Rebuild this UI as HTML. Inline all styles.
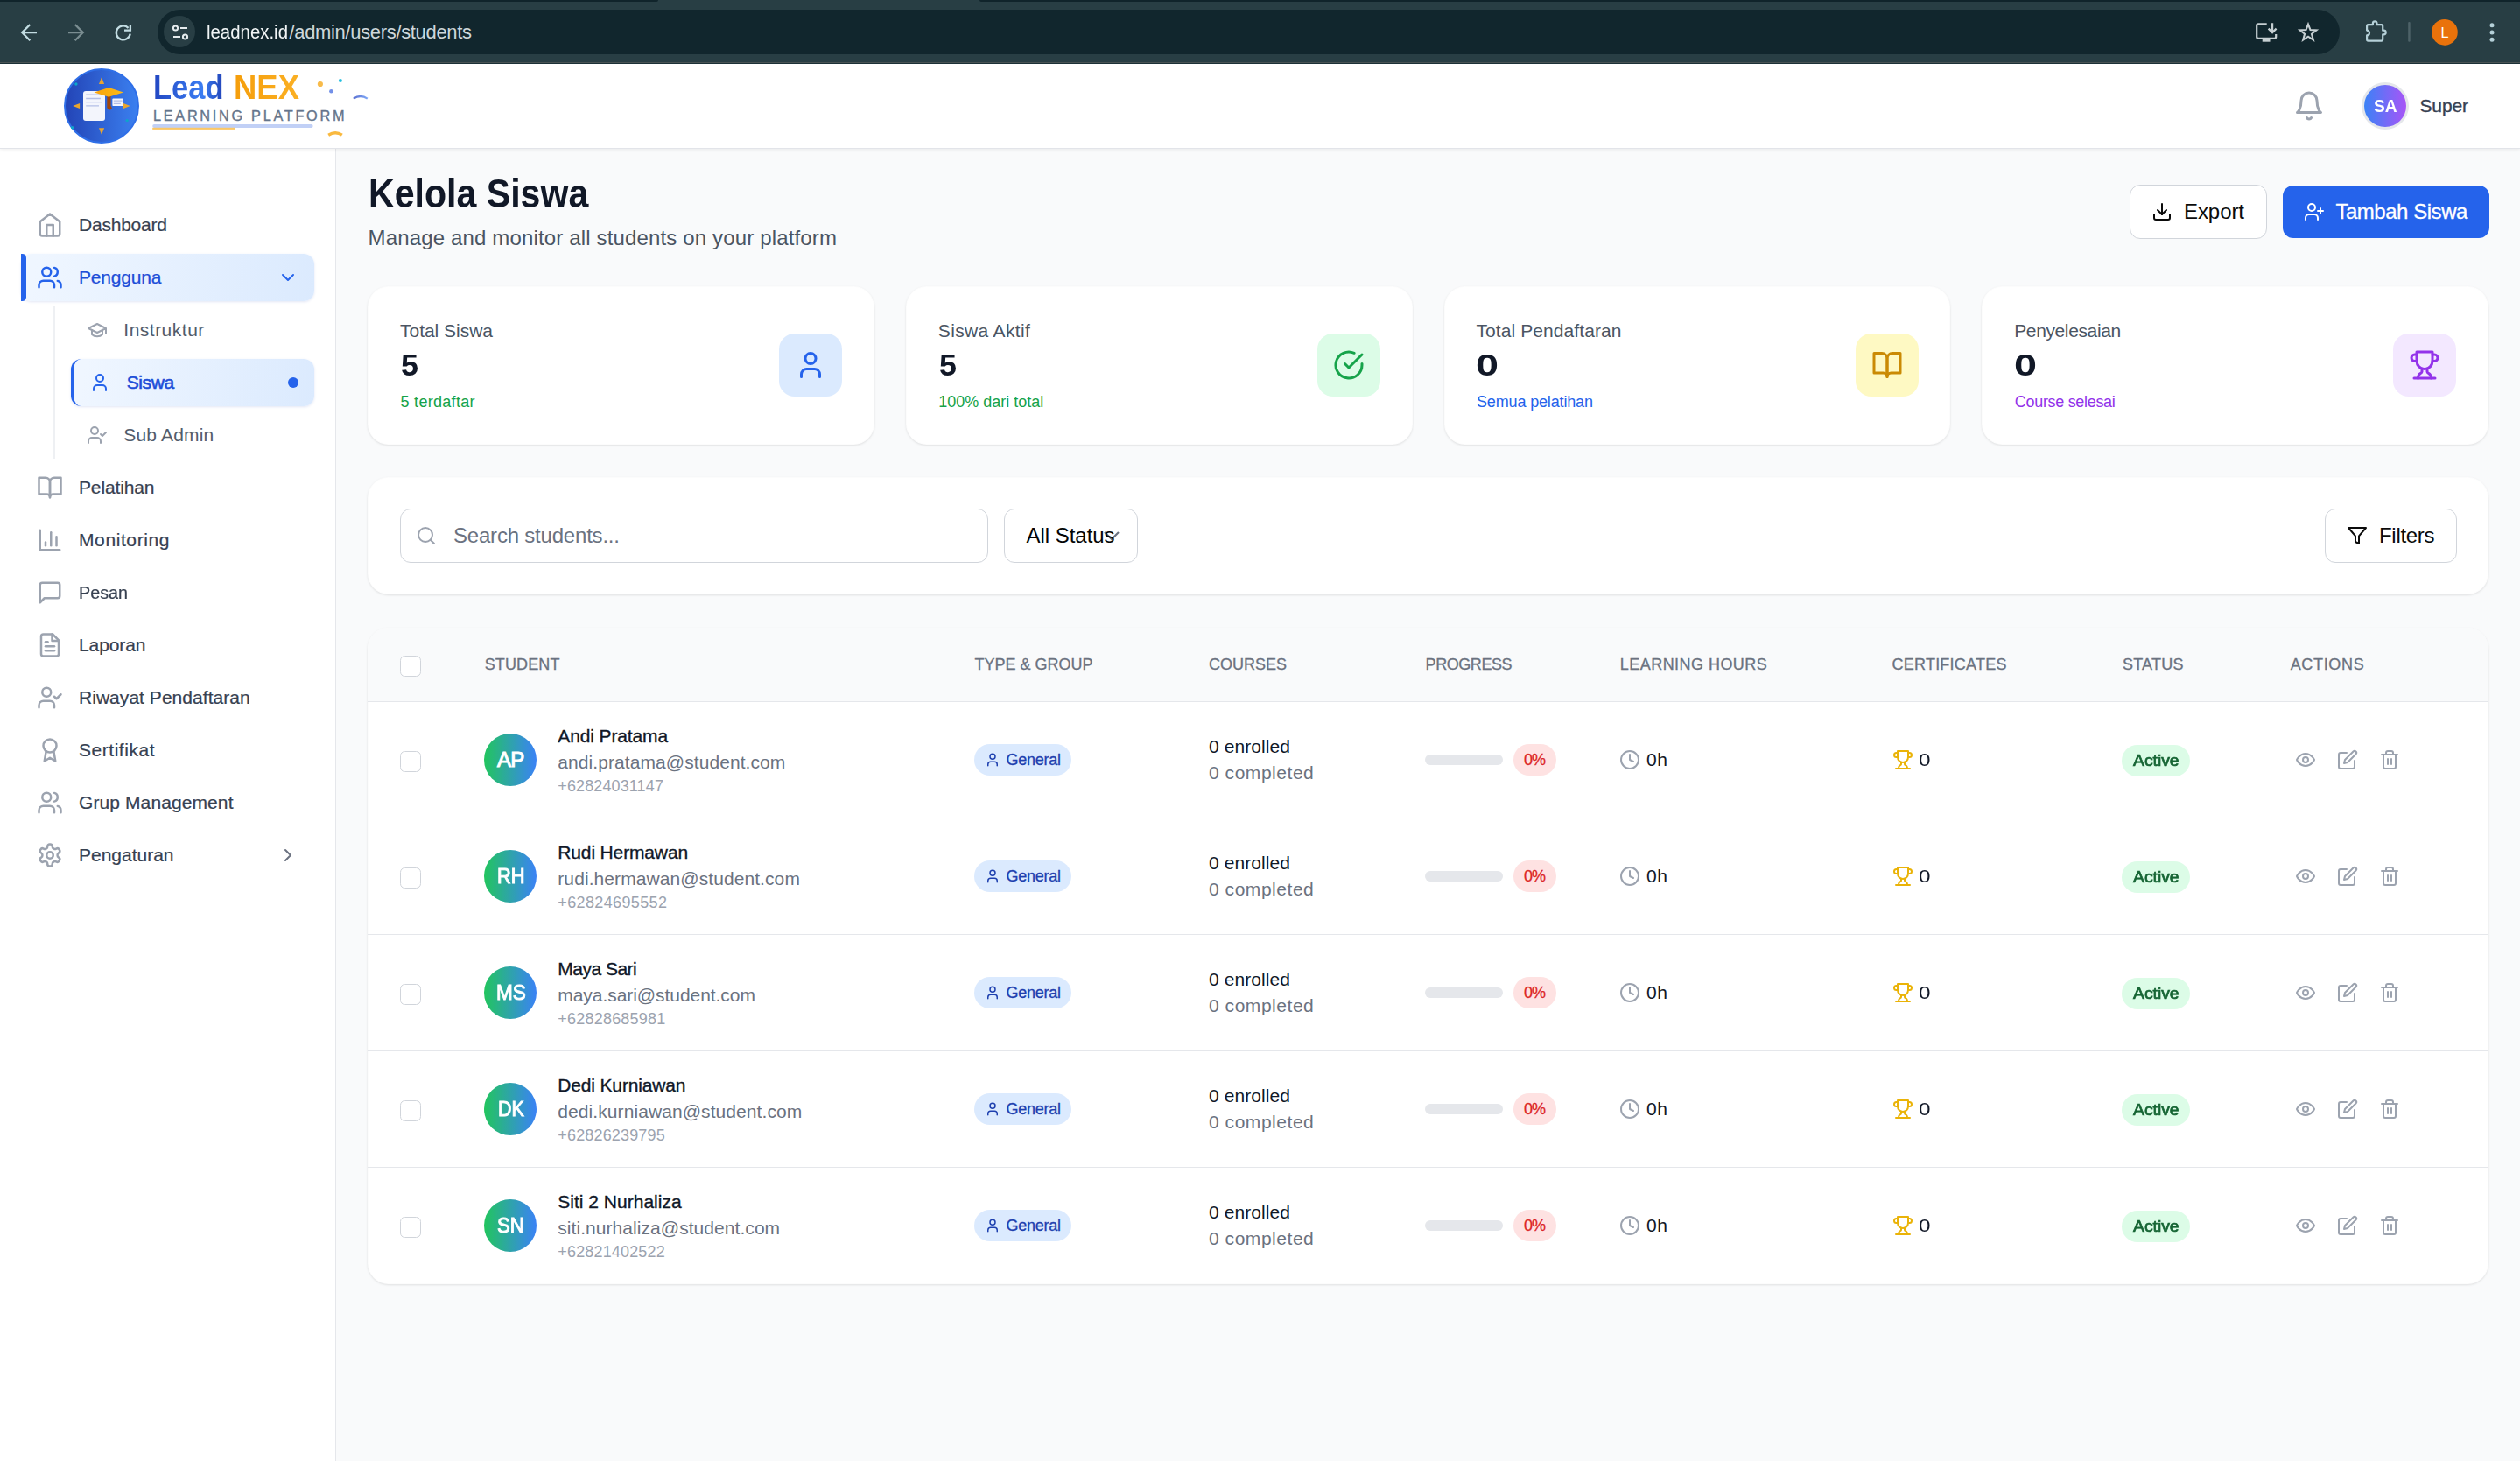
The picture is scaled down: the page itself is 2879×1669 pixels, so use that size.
<!DOCTYPE html>
<html lang="id"><head><meta charset="utf-8"><title>Kelola Siswa - LeadNEX</title>
<style>
html,body{margin:0;padding:0}
body{width:2879px;height:1669px;overflow:hidden;position:relative;background:#f9fafb;font-family:"Liberation Sans", sans-serif;}
.t{position:absolute;white-space:nowrap;line-height:1;}
.b{position:absolute;box-sizing:border-box;}
.i{position:absolute;display:block;overflow:visible}
</style></head>
<body>
<div class="b" style="left:0.0px;top:0.0px;width:2879.0px;height:73.0px;background:#283e44;"></div>
<div class="b" style="left:0.0px;top:0.0px;width:751.6px;height:1.8px;background:#10242b;border-radius:0 0 4px 0;"></div>
<div class="b" style="left:1118.6px;top:0.0px;width:1760.4px;height:1.8px;background:#10242b;border-radius:0 0 0 4px;"></div>
<div class="b" style="left:0.0px;top:71.0px;width:2879.0px;height:1.0px;background:#4a5354;"></div>
<div class="b" style="left:0.0px;top:72.0px;width:2879.0px;height:1.0px;background:#1d3238;"></div>
<div class="b" style="left:180.0px;top:11.0px;width:2493.0px;height:51.0px;background:#11262d;border-radius:26px;"></div>
<div class="b" style="left:187.2px;top:18.4px;width:36.0px;height:36.0px;background:#283e44;border-radius:50%;"></div>
<svg class="i" style="left:0;top:0" width="180" height="73" viewBox="0 0 180 73" fill="none" stroke-width="2.3" stroke-linecap="butt" stroke-linejoin="miter"><path d="M42 37.100H26M34.300 28 25.200 37.100 34.300 46.200" stroke="#c2dce2"/><path d="M78 37.100h16M85.700 28 94.800 37.100 85.700 46.200" stroke="#7a8d91"/><path d="M148.700 38.600A8 8 0 1 1 146.600 31.900" stroke="#c2dce2"/><path d="M148.900 28.100v6.500h-6.900" stroke="#c2dce2"/></svg>
<svg class="i" style="left:194.500px;top:26px" width="22" height="22" viewBox="0 0 22 22" fill="none" stroke="#e6ecee" stroke-width="2"><circle cx="5.5" cy="6" r="2.6"/><path d="M11 6h8"/><circle cx="16.5" cy="16" r="2.6"/><path d="M3 16h8"/></svg>
<span class="t" id="t0" style="left:236.0px;top:26.4px;font-size:22px;color:#f1f5f6;transform:scaleX(0.9271);transform-origin:0 0;">leadnex.id</span>
<span class="t" id="t1" style="left:330.5px;top:26.4px;font-size:22px;color:#ced7da;letter-spacing:-0.337px;">/admin/users/students</span>
<svg class="i" style="left:2560px;top:0" width="319" height="73" viewBox="2560 0 319 73" fill="none" stroke-width="2.2" stroke-linejoin="round"><path d="M2589.700 27.400H2580a1.800 1.800 0 0 0-1.800 1.800v12.900a1.800 1.800 0 0 0 1.800 1.800h18.400a1.800 1.800 0 0 0 1.800-1.800V39.100" stroke="#c6cfd2"/><rect x="2584.700" y="44.800" width="8.800" height="2.900" fill="#c6cfd2" stroke="none"/><path d="M2596.100 26.200v10.300M2591.600 32.600l4.500 4.500 4.500-4.500" stroke="#c6cfd2" stroke-linejoin="miter"/><polygon points="2637.00,27.60 2639.47,34.10 2646.42,34.44 2640.99,38.80 2642.82,45.51 2637.00,41.70 2631.18,45.51 2633.01,38.80 2627.58,34.44 2634.53,34.10" stroke="#c6cfd2" stroke-linejoin="miter" stroke-width="2.100"/><path d="M2704.100 34.600V29.700a1.500 1.500 0 0 1 1.500-1.500H2710.900V26.600a2.300 2.300 0 0 1 4.600 0V28.200H2720.700a1.500 1.500 0 0 1 1.500 1.500V34.700h1.200a2.300 2.300 0 0 1 0 4.600h-1.200V45.100a1.500 1.500 0 0 1-1.500 1.500H2705.600a1.500 1.500 0 0 1-1.500-1.500V40.400a2.900 2.900 0 0 0 0-5.800z" stroke="#b5d0d8"/><rect x="2751.200" y="24.900" width="2.500" height="22.800" rx="1.200" fill="#4d6268" stroke="none"/><circle cx="2792.900" cy="36.800" r="14.900" fill="#e9720b" stroke="none"/><circle cx="2847" cy="28.700" r="2.500" fill="#b5d0d8" stroke="none"/><circle cx="2847" cy="37" r="2.500" fill="#b5d0d8" stroke="none"/><circle cx="2847" cy="45.200" r="2.500" fill="#b5d0d8" stroke="none"/></svg>
<span class="t" id="t2" style="left:2788.5px;top:29.4px;font-size:16.3px;color:#ffffff;">L</span>
<div class="b" style="left:0.0px;top:170.0px;width:384.0px;height:1500.0px;background:#fff;border-right:1.5px solid #e5e7eb;"></div>
<div class="b" style="left:0.0px;top:73.0px;width:2879.0px;height:97.0px;background:#fff;border-bottom:1.5px solid #e2e4e9;box-shadow:0 1px 4px rgba(0,0,0,.07);"></div>
<svg class="i" style="left:70px;top:76px" width="360" height="92" viewBox="70 76 360 92">
<defs><linearGradient id="lg1" x1="0" y1="0" x2="1" y2="0"><stop offset="0" stop-color="#2344b6"/><stop offset="1" stop-color="#3b80f0"/></linearGradient>
<linearGradient id="lg3" x1="0" y1="0" x2="1" y2="0"><stop offset="0" stop-color="#f8a30f"/><stop offset="1" stop-color="#fdbb14"/></linearGradient>
<linearGradient id="lg4" x1="0" y1="0" x2="1" y2="0"><stop offset="0" stop-color="#5a6fd0"/><stop offset="1" stop-color="#7fa8f6"/></linearGradient></defs>
<circle cx="116" cy="121" r="42" fill="url(#lg1)" stroke="#2f6fe8" stroke-width="2"/>
<polygon points="116,88.300 119.100,95.900 113,95.900" fill="#e9a52e"/><polygon points="116,153.700 119.100,146.200 113,146.200" fill="#e9a52e"/>
<polygon points="83.200,121 91.100,118 91.100,124" fill="#e9a52e"/><polygon points="148.700,121 141,118 141,124" fill="#e9a52e"/>
<circle cx="86.900" cy="96" r="1.700" fill="#0ea5c9"/><circle cx="145.200" cy="137.600" r="1.700" fill="#0ea5c9"/><circle cx="82.600" cy="145.800" r="1.700" fill="#0ea5c9"/>
<rect x="95" y="104" width="25" height="34" rx="3" fill="#f3f5fc"/>
<path d="M98.200 108.100h18.600M98.200 112.500h16.700M98.200 116.600h18.600M98.200 120.800h14.800" stroke="#b4bfe6" stroke-width="1.300"/>
<rect x="128.400" y="112.600" width="12.600" height="8.400" rx=".8" fill="#f3f5fc"/><path d="M129.800 115.200h9.800M129.800 118.400h8" stroke="#b4bfe6" stroke-width="1.200"/>
<path d="M122.300 109v13.500a2.100 2.100 0 0 0 4.200 0v-13.500z" fill="#a0460a"/><circle cx="125.400" cy="123.300" r="2.200" fill="#a0460a"/>
<polygon points="107.500,105.500 124.200,100 141,105.500 124.200,110.700" fill="url(#lg3)"/>
<circle cx="365.900" cy="96" r="3.100" fill="#f8bb4a"/><circle cx="388.900" cy="91.900" r="2" fill="#22bfe0"/><circle cx="378.400" cy="104.300" r="2.300" fill="#7390e8"/>
<path d="M403.800 112.600q8-5.200 16 0" fill="none" stroke="url(#lg4)" stroke-width="2.300"/>
<path d="M375.200 154.200q8-5 15.600 0" fill="none" stroke="#f9b93f" stroke-width="3.400"/>
<rect x="174.200" y="141.900" width="183.400" height="4" rx="2" fill="#c1d0f6"/><rect x="174.200" y="145.800" width="93.800" height="2.100" fill="#fbc766"/>
</svg>
<span class="t" id="t3" style="left:175.0px;top:80.7px;font-size:38.5px;color:#2b5fd6;font-weight:700;transform:scaleX(0.8958);transform-origin:0 0;background:linear-gradient(90deg,#2247c2,#3b7df2 70%,#2041b6);-webkit-background-clip:text;background-clip:text;color:transparent;">Lead</span>
<span class="t" id="t4" style="left:266.5px;top:80.7px;font-size:38.5px;color:#f8a51b;font-weight:700;transform:scaleX(0.9473);transform-origin:0 0;background:linear-gradient(90deg,#f59e0b,#fbb024);-webkit-background-clip:text;background-clip:text;color:transparent;">NEX</span>
<span class="t" id="t5" style="left:175.0px;top:123.7px;font-size:16.3px;color:#64748b;-webkit-text-stroke:0.35px #64748b;letter-spacing:2.706px;">LEARNING PLATFORM</span>
<svg class="i" style="left:2619.6px;top:103.0px;" width="36" height="36" viewBox="0 0 24 24" fill="none" stroke="#9ca3af" stroke-width="2" stroke-linecap="round" stroke-linejoin="round"><path d="M6 8a6 6 0 0 1 12 0c0 7 3 9 3 9H3s3-2 3-9"/><path d="M10.3 21a1.94 1.94 0 0 0 3.4 0"/></svg>
<div class="b" style="left:2698.0px;top:94.0px;width:54.0px;height:54.0px;background:#e5e7eb;border-radius:50%;"></div>
<div class="b" style="left:2701.0px;top:97.0px;width:48.0px;height:48.0px;background:linear-gradient(90deg,#3b82f6,#a855f7);border-radius:50%;"></div>
<span class="t" id="t6" style="left:2711.7px;top:110.2px;font-size:21px;color:#fff;font-weight:700;transform:scaleX(0.9113);transform-origin:0 0;">SA</span>
<span class="t" id="t7" style="left:2764.5px;top:110.2px;font-size:21px;color:#374151;-webkit-text-stroke:0.35px #374151;letter-spacing:-0.137px;">Super</span>
<div class="b" style="left:24.0px;top:290.0px;width:335.0px;height:54.0px;background:linear-gradient(100deg,#eff6ff 5%,#dbeafe);border-radius:12px;box-shadow:0 1px 3px rgba(30,64,175,.13);"></div>
<div class="b" style="left:24.0px;top:290.0px;width:6.0px;height:54.0px;background:#2563eb;border-radius:0 4.5px 4.5px 0;"></div>
<div class="b" style="left:60.2px;top:350.0px;width:2.8px;height:174.0px;background:#eef0f3;"></div>
<div class="b" style="left:81.0px;top:410.0px;width:278.0px;height:54.0px;background:linear-gradient(100deg,#eff6ff 5%,#dbeafe);border-radius:12px;border-left:3px solid #2563eb;box-shadow:0 1px 3px rgba(30,64,175,.13);"></div>
<div class="b" style="left:329.0px;top:431.0px;width:12.0px;height:12.0px;background:#2563eb;border-radius:50%;"></div>
<svg class="i" style="left:42.0px;top:242.0px;" width="30" height="30" viewBox="0 0 24 24" fill="none" stroke="#9ca3af" stroke-width="2" stroke-linecap="round" stroke-linejoin="round"><path d="m3 9 9-7 9 7v11a2 2 0 0 1-2 2H5a2 2 0 0 1-2-2z"/><polyline points="9 22 9 12 15 12 15 22"/></svg>
<span class="t" id="t8" style="left:90.0px;top:246.2px;font-size:21px;color:#374151;-webkit-text-stroke:0.22px #374151;letter-spacing:-0.217px;">Dashboard</span>
<svg class="i" style="left:42.0px;top:302.0px;" width="30" height="30" viewBox="0 0 24 24" fill="none" stroke="#2563eb" stroke-width="2" stroke-linecap="round" stroke-linejoin="round"><path d="M16 21v-2a4 4 0 0 0-4-4H6a4 4 0 0 0-4 4v2"/><circle cx="9" cy="7" r="4"/><path d="M22 21v-2a4 4 0 0 0-3-3.87"/><path d="M16 3.13a4 4 0 0 1 0 7.75"/></svg>
<span class="t" id="t9" style="left:90.0px;top:306.2px;font-size:21px;color:#1d4ed8;-webkit-text-stroke:0.22px #1d4ed8;letter-spacing:-0.195px;">Pengguna</span>
<svg class="i" style="left:317.0px;top:305.0px;" width="24" height="24" viewBox="0 0 24 24" fill="none" stroke="#2563eb" stroke-width="2" stroke-linecap="round" stroke-linejoin="round"><path d="m6 9 6 6 6-6"/></svg>
<svg class="i" style="left:99.0px;top:365.0px;" width="24" height="24" viewBox="0 0 24 24" fill="none" stroke="#9ca3af" stroke-width="2" stroke-linecap="round" stroke-linejoin="round"><path d="M22 10v6M2 10l10-5 10 5-10 5z"/><path d="M6 12v5c3 3 9 3 12 0v-5"/></svg>
<span class="t" id="t10" style="left:141.3px;top:365.9px;font-size:21px;color:#525c6b;letter-spacing:0.497px;">Instruktur</span>
<svg class="i" style="left:102.0px;top:425.0px;" width="24" height="24" viewBox="0 0 24 24" fill="none" stroke="#2563eb" stroke-width="2" stroke-linecap="round" stroke-linejoin="round"><path d="M19 21v-2a4 4 0 0 0-4-4H9a4 4 0 0 0-4 4v2"/><circle cx="12" cy="7" r="4"/></svg>
<span class="t" id="t11" style="left:144.7px;top:425.9px;font-size:21px;color:#1d4ed8;-webkit-text-stroke:0.6px #1d4ed8;letter-spacing:-0.383px;">Siswa</span>
<svg class="i" style="left:99.0px;top:485.0px;" width="24" height="24" viewBox="0 0 24 24" fill="none" stroke="#9ca3af" stroke-width="2" stroke-linecap="round" stroke-linejoin="round"><path d="M16 21v-2a4 4 0 0 0-4-4H6a4 4 0 0 0-4 4v2"/><circle cx="9" cy="7" r="4"/><polyline points="16 11 18 13 22 9"/></svg>
<span class="t" id="t12" style="left:141.3px;top:485.9px;font-size:21px;color:#525c6b;letter-spacing:0.178px;">Sub Admin</span>
<svg class="i" style="left:42.0px;top:542.0px;" width="30" height="30" viewBox="0 0 24 24" fill="none" stroke="#9ca3af" stroke-width="2" stroke-linecap="round" stroke-linejoin="round"><path d="M2 3h6a4 4 0 0 1 4 4v14a3 3 0 0 0-3-3H2z"/><path d="M22 3h-6a4 4 0 0 0-4 4v14a3 3 0 0 1 3-3h7z"/></svg>
<span class="t" id="t13" style="left:90.0px;top:546.2px;font-size:21px;color:#374151;-webkit-text-stroke:0.22px #374151;letter-spacing:-0.135px;">Pelatihan</span>
<svg class="i" style="left:42.0px;top:602.0px;" width="30" height="30" viewBox="0 0 24 24" fill="none" stroke="#9ca3af" stroke-width="2" stroke-linecap="round" stroke-linejoin="round"><path d="M3 3v18h18"/><path d="M18 17V9"/><path d="M13 17V5"/><path d="M8 17v-3"/></svg>
<span class="t" id="t14" style="left:90.0px;top:606.2px;font-size:21px;color:#374151;-webkit-text-stroke:0.22px #374151;letter-spacing:0.604px;">Monitoring</span>
<svg class="i" style="left:42.0px;top:662.0px;" width="30" height="30" viewBox="0 0 24 24" fill="none" stroke="#9ca3af" stroke-width="2" stroke-linecap="round" stroke-linejoin="round"><path d="M21 15a2 2 0 0 1-2 2H7l-4 4V5a2 2 0 0 1 2-2h14a2 2 0 0 1 2 2z"/></svg>
<span class="t" id="t15" style="left:90.0px;top:666.2px;font-size:21px;color:#374151;-webkit-text-stroke:0.22px #374151;transform:scaleX(0.9404);transform-origin:0 0;">Pesan</span>
<svg class="i" style="left:42.0px;top:722.0px;" width="30" height="30" viewBox="0 0 24 24" fill="none" stroke="#9ca3af" stroke-width="2" stroke-linecap="round" stroke-linejoin="round"><path d="M14.5 2H6a2 2 0 0 0-2 2v16a2 2 0 0 0 2 2h12a2 2 0 0 0 2-2V7.5L14.5 2z"/><polyline points="14 2 14 8 20 8"/><line x1="16" x2="8" y1="13" y2="13"/><line x1="16" x2="8" y1="17" y2="17"/><line x1="10" x2="8" y1="9" y2="9"/></svg>
<span class="t" id="t16" style="left:90.0px;top:726.2px;font-size:21px;color:#374151;-webkit-text-stroke:0.22px #374151;letter-spacing:-0.096px;">Laporan</span>
<svg class="i" style="left:42.0px;top:782.0px;" width="30" height="30" viewBox="0 0 24 24" fill="none" stroke="#9ca3af" stroke-width="2" stroke-linecap="round" stroke-linejoin="round"><path d="M16 21v-2a4 4 0 0 0-4-4H6a4 4 0 0 0-4 4v2"/><circle cx="9" cy="7" r="4"/><polyline points="16 11 18 13 22 9"/></svg>
<span class="t" id="t17" style="left:90.0px;top:786.2px;font-size:21px;color:#374151;-webkit-text-stroke:0.22px #374151;letter-spacing:0.041px;">Riwayat Pendaftaran</span>
<svg class="i" style="left:42.0px;top:842.0px;" width="30" height="30" viewBox="0 0 24 24" fill="none" stroke="#9ca3af" stroke-width="2" stroke-linecap="round" stroke-linejoin="round"><circle cx="12" cy="8" r="6"/><path d="M15.477 12.89 17 22l-5-3-5 3 1.523-9.11"/></svg>
<span class="t" id="t18" style="left:90.0px;top:846.2px;font-size:21px;color:#374151;-webkit-text-stroke:0.22px #374151;letter-spacing:0.533px;">Sertifikat</span>
<svg class="i" style="left:42.0px;top:902.0px;" width="30" height="30" viewBox="0 0 24 24" fill="none" stroke="#9ca3af" stroke-width="2" stroke-linecap="round" stroke-linejoin="round"><path d="M16 21v-2a4 4 0 0 0-4-4H6a4 4 0 0 0-4 4v2"/><circle cx="9" cy="7" r="4"/><path d="M22 21v-2a4 4 0 0 0-3-3.87"/><path d="M16 3.13a4 4 0 0 1 0 7.75"/></svg>
<span class="t" id="t19" style="left:90.0px;top:906.2px;font-size:21px;color:#374151;-webkit-text-stroke:0.22px #374151;letter-spacing:0.099px;">Grup Management</span>
<svg class="i" style="left:42.0px;top:962.0px;" width="30" height="30" viewBox="0 0 24 24" fill="none" stroke="#9ca3af" stroke-width="2" stroke-linecap="round" stroke-linejoin="round"><path d="M12.22 2h-.44a2 2 0 0 0-2 2v.18a2 2 0 0 1-1 1.73l-.43.25a2 2 0 0 1-2 0l-.15-.08a2 2 0 0 0-2.73.73l-.22.38a2 2 0 0 0 .73 2.73l.15.1a2 2 0 0 1 1 1.72v.51a2 2 0 0 1-1 1.74l-.15.09a2 2 0 0 0-.73 2.73l.22.38a2 2 0 0 0 2.73.73l.15-.08a2 2 0 0 1 2 0l.43.25a2 2 0 0 1 1 1.73V20a2 2 0 0 0 2 2h.44a2 2 0 0 0 2-2v-.18a2 2 0 0 1 1-1.73l.43-.25a2 2 0 0 1 2 0l.15.08a2 2 0 0 0 2.73-.73l.22-.39a2 2 0 0 0-.73-2.73l-.15-.08a2 2 0 0 1-1-1.74v-.5a2 2 0 0 1 1-1.74l.15-.09a2 2 0 0 0 .73-2.73l-.22-.38a2 2 0 0 0-2.73-.73l-.15.08a2 2 0 0 1-2 0l-.43-.25a2 2 0 0 1-1-1.73V4a2 2 0 0 0-2-2z"/><circle cx="12" cy="12" r="3"/></svg>
<span class="t" id="t20" style="left:90.0px;top:966.2px;font-size:21px;color:#374151;-webkit-text-stroke:0.22px #374151;letter-spacing:-0.010px;">Pengaturan</span>
<svg class="i" style="left:317.0px;top:965.0px;" width="24" height="24" viewBox="0 0 24 24" fill="none" stroke="#6b7280" stroke-width="2" stroke-linecap="round" stroke-linejoin="round"><path d="m9 18 6-6-6-6"/></svg>
<span class="t" id="t21" style="left:420.5px;top:198.3px;font-size:46px;color:#111827;font-weight:700;transform:scaleX(0.8936);transform-origin:0 0;">Kelola Siswa</span>
<span class="t" id="t22" style="left:420.5px;top:259.9px;font-size:24px;color:#4b5563;letter-spacing:0.153px;">Manage and monitor all students on your platform</span>
<div class="b" style="left:2433.0px;top:211.0px;width:157.0px;height:62.0px;background:#fff;border:1.5px solid #d1d5db;border-radius:12px;"></div>
<svg class="i" style="left:2458.0px;top:230.0px;" width="24" height="24" viewBox="0 0 24 24" fill="none" stroke="#0b0b0b" stroke-width="2" stroke-linecap="round" stroke-linejoin="round"><path d="M21 15v4a2 2 0 0 1-2 2H5a2 2 0 0 1-2-2v-4"/><polyline points="7 10 12 15 17 10"/><line x1="12" x2="12" y1="15" y2="3"/></svg>
<span class="t" id="t23" style="left:2495.0px;top:230.0px;font-size:24px;color:#0b0b0b;letter-spacing:-0.075px;">Export</span>
<div class="b" style="left:2608.0px;top:212.0px;width:236.0px;height:60.0px;background:#2563eb;border-radius:12px;"></div>
<svg class="i" style="left:2632.0px;top:230.0px;" width="24" height="24" viewBox="0 0 24 24" fill="none" stroke="#fff" stroke-width="2" stroke-linecap="round" stroke-linejoin="round"><path d="M16 21v-2a4 4 0 0 0-4-4H6a4 4 0 0 0-4 4v2"/><circle cx="9" cy="7" r="4"/><line x1="19" x2="19" y1="8" y2="14"/><line x1="22" x2="16" y1="11" y2="11"/></svg>
<span class="t" id="t24" style="left:2668.4px;top:230.0px;font-size:24px;color:#fff;-webkit-text-stroke:0.3px #fff;letter-spacing:-0.462px;">Tambah Siswa</span>
<div class="b" style="left:420.0px;top:327.0px;width:578.8px;height:180.5px;background:#fff;border-radius:24px;box-shadow:0 1px 3px rgba(0,0,0,.08),0 1px 2px rgba(0,0,0,.03),inset 0 0 0 1px rgba(17,24,39,.012);"></div>
<span class="t" id="t25" style="left:457.0px;top:367.2px;font-size:21px;color:#4b5563;letter-spacing:-0.022px;">Total Siswa</span>
<span class="t" id="t26" style="left:458.0px;top:399.9px;font-size:34.3px;color:#111827;font-weight:700;transform:scaleX(1.0483);transform-origin:0 0;">5</span>
<span class="t" id="t27" style="left:457.5px;top:449.6px;font-size:18px;color:#16a34a;letter-spacing:0.295px;">5 terdaftar</span>
<div class="b" style="left:890.0px;top:381.0px;width:72.0px;height:72.0px;background:#dbeafe;border-radius:18px;"></div>
<svg class="i" style="left:908.0px;top:399.0px;" width="36" height="36" viewBox="0 0 24 24" fill="none" stroke="#2563eb" stroke-width="2" stroke-linecap="round" stroke-linejoin="round"><path d="M19 21v-2a4 4 0 0 0-4-4H9a4 4 0 0 0-4 4v2"/><circle cx="12" cy="7" r="4"/></svg>
<div class="b" style="left:1034.8px;top:327.0px;width:578.8px;height:180.5px;background:#fff;border-radius:24px;box-shadow:0 1px 3px rgba(0,0,0,.08),0 1px 2px rgba(0,0,0,.03),inset 0 0 0 1px rgba(17,24,39,.012);"></div>
<span class="t" id="t28" style="left:1071.8px;top:367.2px;font-size:21px;color:#4b5563;letter-spacing:0.345px;">Siswa Aktif</span>
<span class="t" id="t29" style="left:1072.8px;top:399.9px;font-size:34.3px;color:#111827;font-weight:700;transform:scaleX(1.0483);transform-origin:0 0;">5</span>
<span class="t" id="t30" style="left:1072.2px;top:449.6px;font-size:18px;color:#16a34a;letter-spacing:-0.006px;">100% dari total</span>
<div class="b" style="left:1504.8px;top:381.0px;width:72.0px;height:72.0px;background:#dcfce7;border-radius:18px;"></div>
<svg class="i" style="left:1522.8px;top:399.0px;" width="36" height="36" viewBox="0 0 24 24" fill="none" stroke="#16a34a" stroke-width="2" stroke-linecap="round" stroke-linejoin="round"><path d="M22 11.08V12a10 10 0 1 1-5.93-9.14"/><polyline points="22 4 12 14.01 9 11.01"/></svg>
<div class="b" style="left:1649.5px;top:327.0px;width:578.8px;height:180.5px;background:#fff;border-radius:24px;box-shadow:0 1px 3px rgba(0,0,0,.08),0 1px 2px rgba(0,0,0,.03),inset 0 0 0 1px rgba(17,24,39,.012);"></div>
<span class="t" id="t31" style="left:1686.5px;top:367.2px;font-size:21px;color:#4b5563;letter-spacing:0.086px;">Total Pendaftaran</span>
<span class="t" id="t32" style="left:1686.0px;top:399.9px;font-size:34.3px;color:#111827;font-weight:700;transform:scaleX(1.3628);transform-origin:0 0;">0</span>
<span class="t" id="t33" style="left:1687.0px;top:449.6px;font-size:18px;color:#2563eb;letter-spacing:-0.151px;">Semua pelatihan</span>
<div class="b" style="left:2119.5px;top:381.0px;width:72.0px;height:72.0px;background:#fef9c3;border-radius:18px;"></div>
<svg class="i" style="left:2137.5px;top:399.0px;" width="36" height="36" viewBox="0 0 24 24" fill="none" stroke="#ca8a04" stroke-width="2" stroke-linecap="round" stroke-linejoin="round"><path d="M2 3h6a4 4 0 0 1 4 4v14a3 3 0 0 0-3-3H2z"/><path d="M22 3h-6a4 4 0 0 0-4 4v14a3 3 0 0 1 3-3h7z"/></svg>
<div class="b" style="left:2264.2px;top:327.0px;width:578.8px;height:180.5px;background:#fff;border-radius:24px;box-shadow:0 1px 3px rgba(0,0,0,.08),0 1px 2px rgba(0,0,0,.03),inset 0 0 0 1px rgba(17,24,39,.012);"></div>
<span class="t" id="t34" style="left:2301.2px;top:367.2px;font-size:21px;color:#4b5563;letter-spacing:-0.372px;">Penyelesaian</span>
<span class="t" id="t35" style="left:2300.8px;top:399.9px;font-size:34.3px;color:#111827;font-weight:700;transform:scaleX(1.3628);transform-origin:0 0;">0</span>
<span class="t" id="t36" style="left:2301.8px;top:449.6px;font-size:18px;color:#9333ea;letter-spacing:-0.312px;">Course selesai</span>
<div class="b" style="left:2734.2px;top:381.0px;width:72.0px;height:72.0px;background:#f3e8ff;border-radius:18px;"></div>
<svg class="i" style="left:2752.2px;top:399.0px;" width="36" height="36" viewBox="0 0 24 24" fill="none" stroke="#9333ea" stroke-width="2" stroke-linecap="round" stroke-linejoin="round"><path d="M6 9H4.5a2.5 2.5 0 0 1 0-5H6"/><path d="M18 9h1.5a2.5 2.5 0 0 0 0-5H18"/><path d="M4 22h16"/><path d="M10 14.66V17c0 .55-.47.98-.97 1.21C7.85 18.75 7 20.24 7 22"/><path d="M14 14.66V17c0 .55.47.98.97 1.21C16.15 18.75 17 20.24 17 22"/><path d="M18 2H6v7a6 6 0 0 0 12 0V2Z"/></svg>
<div class="b" style="left:420.0px;top:545.0px;width:2423.0px;height:134.0px;background:#fff;border-radius:24px;box-shadow:0 1px 3px rgba(0,0,0,.08),0 1px 2px rgba(0,0,0,.03),inset 0 0 0 1px rgba(17,24,39,.012);"></div>
<div class="b" style="left:457.0px;top:581.0px;width:672.0px;height:62.0px;background:#fff;border:1.5px solid #d1d5db;border-radius:12px;"></div>
<svg class="i" style="left:474.5px;top:600.0px;" width="24" height="24" viewBox="0 0 24 24" fill="none" stroke="#9ca3af" stroke-width="2" stroke-linecap="round" stroke-linejoin="round"><circle cx="11" cy="11" r="8"/><path d="m21 21-4.3-4.3"/></svg>
<span class="t" id="t37" style="left:518.0px;top:600.1px;font-size:24px;color:#6b7280;letter-spacing:-0.203px;">Search students...</span>
<div class="b" style="left:1147.0px;top:581.0px;width:153.0px;height:62.0px;background:#fff;border:1.5px solid #d1d5db;border-radius:12px;"></div>
<svg class="i" style="left:1260px;top:605px" width="20" height="14" viewBox="0 0 20 14" fill="none" stroke="#6b7280" stroke-width="2.2"><path d="M2 3l8 8 8-8"/></svg>
<span class="t" id="t38" style="left:1172.6px;top:600.1px;font-size:24px;color:#050505;letter-spacing:-0.043px;">All Status</span>
<div class="b" style="left:2656.0px;top:581.0px;width:151.0px;height:62.0px;background:#fff;border:1.5px solid #d1d5db;border-radius:12px;"></div>
<svg class="i" style="left:2681.0px;top:600.0px;" width="24" height="24" viewBox="0 0 24 24" fill="none" stroke="#0b0b0b" stroke-width="2" stroke-linecap="round" stroke-linejoin="round"><polygon points="22 3 2 3 10 12.46 10 19 14 21 14 12.46 22 3"/></svg>
<span class="t" id="t39" style="left:2718.0px;top:600.1px;font-size:24px;color:#0b0b0b;letter-spacing:-0.307px;">Filters</span>
<div class="b" style="left:420.0px;top:716.5px;width:2423.0px;height:750.0px;background:#fff;border-radius:24px;box-shadow:0 1px 3px rgba(0,0,0,.08),0 1px 2px rgba(0,0,0,.03),inset 0 0 0 1px rgba(17,24,39,.012);overflow:hidden;"></div>
<div class="b" style="left:420.0px;top:716.5px;width:2423.0px;height:85.5px;background:#f9fafb;border-radius:24px 24px 0 0;border-bottom:1.5px solid #e5e7eb;"></div>
<div class="b" style="left:457.0px;top:749.0px;width:24.0px;height:24.0px;background:#fff;border:1.5px solid #d1d5db;border-radius:5.5px;"></div>
<span class="t" id="t40" style="left:553.7px;top:749.9px;font-size:18px;color:#6b7280;-webkit-text-stroke:0.3px #6b7280;letter-spacing:0.117px;">STUDENT</span>
<span class="t" id="t41" style="left:1113.6px;top:749.9px;font-size:18px;color:#6b7280;-webkit-text-stroke:0.3px #6b7280;letter-spacing:-0.003px;">TYPE &amp; GROUP</span>
<span class="t" id="t42" style="left:1381.0px;top:749.9px;font-size:18px;color:#6b7280;-webkit-text-stroke:0.3px #6b7280;letter-spacing:-0.003px;">COURSES</span>
<span class="t" id="t43" style="left:1628.6px;top:749.9px;font-size:18px;color:#6b7280;-webkit-text-stroke:0.3px #6b7280;letter-spacing:-0.433px;">PROGRESS</span>
<span class="t" id="t44" style="left:1850.8px;top:749.9px;font-size:18px;color:#6b7280;-webkit-text-stroke:0.3px #6b7280;letter-spacing:0.459px;">LEARNING HOURS</span>
<span class="t" id="t45" style="left:2161.5px;top:749.9px;font-size:18px;color:#6b7280;-webkit-text-stroke:0.3px #6b7280;letter-spacing:0.240px;">CERTIFICATES</span>
<span class="t" id="t46" style="left:2425.0px;top:749.9px;font-size:18px;color:#6b7280;-webkit-text-stroke:0.3px #6b7280;letter-spacing:0.211px;">STATUS</span>
<span class="t" id="t47" style="left:2616.7px;top:749.9px;font-size:18px;color:#6b7280;-webkit-text-stroke:0.3px #6b7280;letter-spacing:0.664px;">ACTIONS</span>
<div class="b" style="left:457.0px;top:858.0px;width:24.0px;height:24.0px;background:#fff;border:1.5px solid #d1d5db;border-radius:5.5px;"></div>
<div class="b" style="left:553.0px;top:838.0px;width:60.0px;height:60.0px;background:linear-gradient(90deg,#22c55e,#3b82f6);border-radius:50%;"></div>
<span class="t" id="t48" style="left:568.1px;top:855.9px;font-size:24px;color:#fff;-webkit-text-stroke:1.0px #fff;letter-spacing:-0.916px;">AP</span>
<span class="t" id="t49" style="left:637.3px;top:830.2px;font-size:21px;color:#111827;-webkit-text-stroke:0.35px #111827;letter-spacing:-0.130px;">Andi Pratama</span>
<span class="t" id="t50" style="left:637.3px;top:860.2px;font-size:21px;color:#6b7280;letter-spacing:0.074px;">andi.pratama@student.com</span>
<span class="t" id="t51" style="left:637.3px;top:888.8px;font-size:18px;color:#9ca3af;letter-spacing:0.118px;">+62824031147</span>
<div class="b" style="left:1113.0px;top:850.0px;width:111.0px;height:36.0px;background:#dbeafe;border-radius:18px;"></div>
<svg class="i" style="left:1124.7px;top:859.0px;" width="18" height="18" viewBox="0 0 24 24" fill="none" stroke="#1e40af" stroke-width="2" stroke-linecap="round" stroke-linejoin="round"><path d="M19 21v-2a4 4 0 0 0-4-4H9a4 4 0 0 0-4 4v2"/><circle cx="12" cy="7" r="4"/></svg>
<span class="t" id="t52" style="left:1149.6px;top:858.8px;font-size:18px;color:#1e40af;-webkit-text-stroke:0.3px #1e40af;letter-spacing:-0.274px;">General</span>
<span class="t" id="t53" style="left:1381.0px;top:842.2px;font-size:21px;color:#111827;letter-spacing:0.085px;">0 enrolled</span>
<span class="t" id="t54" style="left:1381.0px;top:871.9px;font-size:21px;color:#6b7280;letter-spacing:0.539px;">0 completed</span>
<div class="b" style="left:1628.0px;top:862.0px;width:88.8px;height:12.0px;background:#e5e7eb;border-radius:6px;"></div>
<div class="b" style="left:1729.0px;top:850.0px;width:49.0px;height:36.0px;background:#fee2e2;border-radius:18px;"></div>
<span class="t" id="t55" style="left:1741.0px;top:858.8px;font-size:18px;color:#dc2626;-webkit-text-stroke:0.3px #dc2626;letter-spacing:-1.016px;">0%</span>
<svg class="i" style="left:1850.0px;top:856.0px;" width="24" height="24" viewBox="0 0 24 24" fill="none" stroke="#9ca3af" stroke-width="2" stroke-linecap="round" stroke-linejoin="round"><circle cx="12" cy="12" r="10"/><polyline points="12 6 12 12 16 14"/></svg>
<span class="t" id="t56" style="left:1881.0px;top:856.9px;font-size:21px;color:#111827;letter-spacing:0.641px;">0h</span>
<svg class="i" style="left:2161.5px;top:856.0px;" width="24" height="24" viewBox="0 0 24 24" fill="none" stroke="#eab308" stroke-width="2" stroke-linecap="round" stroke-linejoin="round"><path d="M6 9H4.5a2.5 2.5 0 0 1 0-5H6"/><path d="M18 9h1.5a2.5 2.5 0 0 0 0-5H18"/><path d="M4 22h16"/><path d="M10 14.66V17c0 .55-.47.98-.97 1.21C7.85 18.75 7 20.24 7 22"/><path d="M14 14.66V17c0 .55.47.98.97 1.21C16.15 18.75 17 20.24 17 22"/><path d="M18 2H6v7a6 6 0 0 0 12 0V2Z"/></svg>
<span class="t" id="t57" style="left:2191.5px;top:856.9px;font-size:21px;color:#111827;transform:scaleX(1.1551);transform-origin:0 0;">0</span>
<div class="b" style="left:2424.0px;top:851.0px;width:78.0px;height:36.0px;background:#dcfce7;border-radius:18px;"></div>
<span class="t" id="t58" style="left:2437.0px;top:859.5px;font-size:18px;color:#166534;-webkit-text-stroke:0.7px #166534;transform:scaleX(1.0728);transform-origin:0 0;">Active</span>
<svg class="i" style="left:2622.0px;top:856.0px;" width="24" height="24" viewBox="0 0 24 24" fill="none" stroke="#9ca3af" stroke-width="2" stroke-linecap="round" stroke-linejoin="round"><path d="M2 12s3-7 10-7 10 7 10 7-3 7-10 7-10-7-10-7Z"/><circle cx="12" cy="12" r="3"/></svg>
<svg class="i" style="left:2670.0px;top:856.0px;" width="24" height="24" viewBox="0 0 24 24" fill="none" stroke="#9ca3af" stroke-width="2" stroke-linecap="round" stroke-linejoin="round"><path d="M11 4H4a2 2 0 0 0-2 2v14a2 2 0 0 0 2 2h14a2 2 0 0 0 2-2v-7"/><path d="M18.5 2.5a2.121 2.121 0 0 1 3 3L12 15l-4 1 1-4 9.5-9.5z"/></svg>
<svg class="i" style="left:2718.0px;top:856.0px;" width="24" height="24" viewBox="0 0 24 24" fill="none" stroke="#9ca3af" stroke-width="2" stroke-linecap="round" stroke-linejoin="round"><path d="M3 6h18"/><path d="M19 6v14c0 1-1 2-2 2H7c-1 0-2-1-2-2V6"/><path d="M8 6V4c0-1 1-2 2-2h4c1 0 2 1 2 2v2"/><line x1="10" x2="10" y1="11" y2="17"/><line x1="14" x2="14" y1="11" y2="17"/></svg>
<div class="b" style="left:420.0px;top:933.5px;width:2423.0px;height:1.5px;background:#e5e7eb;"></div>
<div class="b" style="left:457.0px;top:991.0px;width:24.0px;height:24.0px;background:#fff;border:1.5px solid #d1d5db;border-radius:5.5px;"></div>
<div class="b" style="left:553.0px;top:971.0px;width:60.0px;height:60.0px;background:linear-gradient(90deg,#22c55e,#3b82f6);border-radius:50%;"></div>
<span class="t" id="t59" style="left:567.9px;top:988.9px;font-size:24px;color:#fff;-webkit-text-stroke:1.0px #fff;transform:scaleX(0.9114);transform-origin:0 0;">RH</span>
<span class="t" id="t60" style="left:637.3px;top:963.2px;font-size:21px;color:#111827;-webkit-text-stroke:0.35px #111827;letter-spacing:-0.147px;">Rudi Hermawan</span>
<span class="t" id="t61" style="left:637.3px;top:993.2px;font-size:21px;color:#6b7280;letter-spacing:0.082px;">rudi.hermawan@student.com</span>
<span class="t" id="t62" style="left:637.3px;top:1021.8px;font-size:18px;color:#9ca3af;letter-spacing:0.360px;">+62824695552</span>
<div class="b" style="left:1113.0px;top:983.0px;width:111.0px;height:36.0px;background:#dbeafe;border-radius:18px;"></div>
<svg class="i" style="left:1124.7px;top:992.0px;" width="18" height="18" viewBox="0 0 24 24" fill="none" stroke="#1e40af" stroke-width="2" stroke-linecap="round" stroke-linejoin="round"><path d="M19 21v-2a4 4 0 0 0-4-4H9a4 4 0 0 0-4 4v2"/><circle cx="12" cy="7" r="4"/></svg>
<span class="t" id="t63" style="left:1149.6px;top:991.8px;font-size:18px;color:#1e40af;-webkit-text-stroke:0.3px #1e40af;letter-spacing:-0.274px;">General</span>
<span class="t" id="t64" style="left:1381.0px;top:975.2px;font-size:21px;color:#111827;letter-spacing:0.085px;">0 enrolled</span>
<span class="t" id="t65" style="left:1381.0px;top:1004.9px;font-size:21px;color:#6b7280;letter-spacing:0.539px;">0 completed</span>
<div class="b" style="left:1628.0px;top:995.0px;width:88.8px;height:12.0px;background:#e5e7eb;border-radius:6px;"></div>
<div class="b" style="left:1729.0px;top:983.0px;width:49.0px;height:36.0px;background:#fee2e2;border-radius:18px;"></div>
<span class="t" id="t66" style="left:1741.0px;top:991.8px;font-size:18px;color:#dc2626;-webkit-text-stroke:0.3px #dc2626;letter-spacing:-1.016px;">0%</span>
<svg class="i" style="left:1850.0px;top:989.0px;" width="24" height="24" viewBox="0 0 24 24" fill="none" stroke="#9ca3af" stroke-width="2" stroke-linecap="round" stroke-linejoin="round"><circle cx="12" cy="12" r="10"/><polyline points="12 6 12 12 16 14"/></svg>
<span class="t" id="t67" style="left:1881.0px;top:989.9px;font-size:21px;color:#111827;letter-spacing:0.641px;">0h</span>
<svg class="i" style="left:2161.5px;top:989.0px;" width="24" height="24" viewBox="0 0 24 24" fill="none" stroke="#eab308" stroke-width="2" stroke-linecap="round" stroke-linejoin="round"><path d="M6 9H4.5a2.5 2.5 0 0 1 0-5H6"/><path d="M18 9h1.5a2.5 2.5 0 0 0 0-5H18"/><path d="M4 22h16"/><path d="M10 14.66V17c0 .55-.47.98-.97 1.21C7.85 18.75 7 20.24 7 22"/><path d="M14 14.66V17c0 .55.47.98.97 1.21C16.15 18.75 17 20.24 17 22"/><path d="M18 2H6v7a6 6 0 0 0 12 0V2Z"/></svg>
<span class="t" id="t68" style="left:2191.5px;top:989.9px;font-size:21px;color:#111827;transform:scaleX(1.1551);transform-origin:0 0;">0</span>
<div class="b" style="left:2424.0px;top:984.0px;width:78.0px;height:36.0px;background:#dcfce7;border-radius:18px;"></div>
<span class="t" id="t69" style="left:2437.0px;top:992.5px;font-size:18px;color:#166534;-webkit-text-stroke:0.7px #166534;transform:scaleX(1.0728);transform-origin:0 0;">Active</span>
<svg class="i" style="left:2622.0px;top:989.0px;" width="24" height="24" viewBox="0 0 24 24" fill="none" stroke="#9ca3af" stroke-width="2" stroke-linecap="round" stroke-linejoin="round"><path d="M2 12s3-7 10-7 10 7 10 7-3 7-10 7-10-7-10-7Z"/><circle cx="12" cy="12" r="3"/></svg>
<svg class="i" style="left:2670.0px;top:989.0px;" width="24" height="24" viewBox="0 0 24 24" fill="none" stroke="#9ca3af" stroke-width="2" stroke-linecap="round" stroke-linejoin="round"><path d="M11 4H4a2 2 0 0 0-2 2v14a2 2 0 0 0 2 2h14a2 2 0 0 0 2-2v-7"/><path d="M18.5 2.5a2.121 2.121 0 0 1 3 3L12 15l-4 1 1-4 9.5-9.5z"/></svg>
<svg class="i" style="left:2718.0px;top:989.0px;" width="24" height="24" viewBox="0 0 24 24" fill="none" stroke="#9ca3af" stroke-width="2" stroke-linecap="round" stroke-linejoin="round"><path d="M3 6h18"/><path d="M19 6v14c0 1-1 2-2 2H7c-1 0-2-1-2-2V6"/><path d="M8 6V4c0-1 1-2 2-2h4c1 0 2 1 2 2v2"/><line x1="10" x2="10" y1="11" y2="17"/><line x1="14" x2="14" y1="11" y2="17"/></svg>
<div class="b" style="left:420.0px;top:1066.5px;width:2423.0px;height:1.5px;background:#e5e7eb;"></div>
<div class="b" style="left:457.0px;top:1124.0px;width:24.0px;height:24.0px;background:#fff;border:1.5px solid #d1d5db;border-radius:5.5px;"></div>
<div class="b" style="left:553.0px;top:1104.0px;width:60.0px;height:60.0px;background:linear-gradient(90deg,#22c55e,#3b82f6);border-radius:50%;"></div>
<span class="t" id="t70" style="left:566.8px;top:1121.9px;font-size:24px;color:#fff;-webkit-text-stroke:1.0px #fff;transform:scaleX(0.9389);transform-origin:0 0;">MS</span>
<span class="t" id="t71" style="left:637.3px;top:1096.2px;font-size:21px;color:#111827;-webkit-text-stroke:0.35px #111827;letter-spacing:-0.516px;">Maya Sari</span>
<span class="t" id="t72" style="left:637.3px;top:1126.2px;font-size:21px;color:#6b7280;letter-spacing:-0.057px;">maya.sari@student.com</span>
<span class="t" id="t73" style="left:637.3px;top:1154.8px;font-size:18px;color:#9ca3af;letter-spacing:0.214px;">+62828685981</span>
<div class="b" style="left:1113.0px;top:1116.0px;width:111.0px;height:36.0px;background:#dbeafe;border-radius:18px;"></div>
<svg class="i" style="left:1124.7px;top:1125.0px;" width="18" height="18" viewBox="0 0 24 24" fill="none" stroke="#1e40af" stroke-width="2" stroke-linecap="round" stroke-linejoin="round"><path d="M19 21v-2a4 4 0 0 0-4-4H9a4 4 0 0 0-4 4v2"/><circle cx="12" cy="7" r="4"/></svg>
<span class="t" id="t74" style="left:1149.6px;top:1124.8px;font-size:18px;color:#1e40af;-webkit-text-stroke:0.3px #1e40af;letter-spacing:-0.274px;">General</span>
<span class="t" id="t75" style="left:1381.0px;top:1108.2px;font-size:21px;color:#111827;letter-spacing:0.085px;">0 enrolled</span>
<span class="t" id="t76" style="left:1381.0px;top:1137.9px;font-size:21px;color:#6b7280;letter-spacing:0.539px;">0 completed</span>
<div class="b" style="left:1628.0px;top:1128.0px;width:88.8px;height:12.0px;background:#e5e7eb;border-radius:6px;"></div>
<div class="b" style="left:1729.0px;top:1116.0px;width:49.0px;height:36.0px;background:#fee2e2;border-radius:18px;"></div>
<span class="t" id="t77" style="left:1741.0px;top:1124.8px;font-size:18px;color:#dc2626;-webkit-text-stroke:0.3px #dc2626;letter-spacing:-1.016px;">0%</span>
<svg class="i" style="left:1850.0px;top:1122.0px;" width="24" height="24" viewBox="0 0 24 24" fill="none" stroke="#9ca3af" stroke-width="2" stroke-linecap="round" stroke-linejoin="round"><circle cx="12" cy="12" r="10"/><polyline points="12 6 12 12 16 14"/></svg>
<span class="t" id="t78" style="left:1881.0px;top:1122.9px;font-size:21px;color:#111827;letter-spacing:0.641px;">0h</span>
<svg class="i" style="left:2161.5px;top:1122.0px;" width="24" height="24" viewBox="0 0 24 24" fill="none" stroke="#eab308" stroke-width="2" stroke-linecap="round" stroke-linejoin="round"><path d="M6 9H4.5a2.5 2.5 0 0 1 0-5H6"/><path d="M18 9h1.5a2.5 2.5 0 0 0 0-5H18"/><path d="M4 22h16"/><path d="M10 14.66V17c0 .55-.47.98-.97 1.21C7.85 18.75 7 20.24 7 22"/><path d="M14 14.66V17c0 .55.47.98.97 1.21C16.15 18.75 17 20.24 17 22"/><path d="M18 2H6v7a6 6 0 0 0 12 0V2Z"/></svg>
<span class="t" id="t79" style="left:2191.5px;top:1122.9px;font-size:21px;color:#111827;transform:scaleX(1.1551);transform-origin:0 0;">0</span>
<div class="b" style="left:2424.0px;top:1117.0px;width:78.0px;height:36.0px;background:#dcfce7;border-radius:18px;"></div>
<span class="t" id="t80" style="left:2437.0px;top:1125.5px;font-size:18px;color:#166534;-webkit-text-stroke:0.7px #166534;transform:scaleX(1.0728);transform-origin:0 0;">Active</span>
<svg class="i" style="left:2622.0px;top:1122.0px;" width="24" height="24" viewBox="0 0 24 24" fill="none" stroke="#9ca3af" stroke-width="2" stroke-linecap="round" stroke-linejoin="round"><path d="M2 12s3-7 10-7 10 7 10 7-3 7-10 7-10-7-10-7Z"/><circle cx="12" cy="12" r="3"/></svg>
<svg class="i" style="left:2670.0px;top:1122.0px;" width="24" height="24" viewBox="0 0 24 24" fill="none" stroke="#9ca3af" stroke-width="2" stroke-linecap="round" stroke-linejoin="round"><path d="M11 4H4a2 2 0 0 0-2 2v14a2 2 0 0 0 2 2h14a2 2 0 0 0 2-2v-7"/><path d="M18.5 2.5a2.121 2.121 0 0 1 3 3L12 15l-4 1 1-4 9.5-9.5z"/></svg>
<svg class="i" style="left:2718.0px;top:1122.0px;" width="24" height="24" viewBox="0 0 24 24" fill="none" stroke="#9ca3af" stroke-width="2" stroke-linecap="round" stroke-linejoin="round"><path d="M3 6h18"/><path d="M19 6v14c0 1-1 2-2 2H7c-1 0-2-1-2-2V6"/><path d="M8 6V4c0-1 1-2 2-2h4c1 0 2 1 2 2v2"/><line x1="10" x2="10" y1="11" y2="17"/><line x1="14" x2="14" y1="11" y2="17"/></svg>
<div class="b" style="left:420.0px;top:1199.5px;width:2423.0px;height:1.5px;background:#e5e7eb;"></div>
<div class="b" style="left:457.0px;top:1257.0px;width:24.0px;height:24.0px;background:#fff;border:1.5px solid #d1d5db;border-radius:5.5px;"></div>
<div class="b" style="left:553.0px;top:1237.0px;width:60.0px;height:60.0px;background:linear-gradient(90deg,#22c55e,#3b82f6);border-radius:50%;"></div>
<span class="t" id="t81" style="left:568.9px;top:1254.9px;font-size:24px;color:#fff;-webkit-text-stroke:1.0px #fff;transform:scaleX(0.8907);transform-origin:0 0;">DK</span>
<span class="t" id="t82" style="left:637.3px;top:1229.2px;font-size:21px;color:#111827;-webkit-text-stroke:0.35px #111827;letter-spacing:-0.159px;">Dedi Kurniawan</span>
<span class="t" id="t83" style="left:637.3px;top:1259.2px;font-size:21px;color:#6b7280;letter-spacing:0.081px;">dedi.kurniawan@student.com</span>
<span class="t" id="t84" style="left:637.3px;top:1287.8px;font-size:18px;color:#9ca3af;letter-spacing:0.160px;">+62826239795</span>
<div class="b" style="left:1113.0px;top:1249.0px;width:111.0px;height:36.0px;background:#dbeafe;border-radius:18px;"></div>
<svg class="i" style="left:1124.7px;top:1258.0px;" width="18" height="18" viewBox="0 0 24 24" fill="none" stroke="#1e40af" stroke-width="2" stroke-linecap="round" stroke-linejoin="round"><path d="M19 21v-2a4 4 0 0 0-4-4H9a4 4 0 0 0-4 4v2"/><circle cx="12" cy="7" r="4"/></svg>
<span class="t" id="t85" style="left:1149.6px;top:1257.8px;font-size:18px;color:#1e40af;-webkit-text-stroke:0.3px #1e40af;letter-spacing:-0.274px;">General</span>
<span class="t" id="t86" style="left:1381.0px;top:1241.2px;font-size:21px;color:#111827;letter-spacing:0.085px;">0 enrolled</span>
<span class="t" id="t87" style="left:1381.0px;top:1270.9px;font-size:21px;color:#6b7280;letter-spacing:0.539px;">0 completed</span>
<div class="b" style="left:1628.0px;top:1261.0px;width:88.8px;height:12.0px;background:#e5e7eb;border-radius:6px;"></div>
<div class="b" style="left:1729.0px;top:1249.0px;width:49.0px;height:36.0px;background:#fee2e2;border-radius:18px;"></div>
<span class="t" id="t88" style="left:1741.0px;top:1257.8px;font-size:18px;color:#dc2626;-webkit-text-stroke:0.3px #dc2626;letter-spacing:-1.016px;">0%</span>
<svg class="i" style="left:1850.0px;top:1255.0px;" width="24" height="24" viewBox="0 0 24 24" fill="none" stroke="#9ca3af" stroke-width="2" stroke-linecap="round" stroke-linejoin="round"><circle cx="12" cy="12" r="10"/><polyline points="12 6 12 12 16 14"/></svg>
<span class="t" id="t89" style="left:1881.0px;top:1255.9px;font-size:21px;color:#111827;letter-spacing:0.641px;">0h</span>
<svg class="i" style="left:2161.5px;top:1255.0px;" width="24" height="24" viewBox="0 0 24 24" fill="none" stroke="#eab308" stroke-width="2" stroke-linecap="round" stroke-linejoin="round"><path d="M6 9H4.5a2.5 2.5 0 0 1 0-5H6"/><path d="M18 9h1.5a2.5 2.5 0 0 0 0-5H18"/><path d="M4 22h16"/><path d="M10 14.66V17c0 .55-.47.98-.97 1.21C7.85 18.75 7 20.24 7 22"/><path d="M14 14.66V17c0 .55.47.98.97 1.21C16.15 18.75 17 20.24 17 22"/><path d="M18 2H6v7a6 6 0 0 0 12 0V2Z"/></svg>
<span class="t" id="t90" style="left:2191.5px;top:1255.9px;font-size:21px;color:#111827;transform:scaleX(1.1551);transform-origin:0 0;">0</span>
<div class="b" style="left:2424.0px;top:1250.0px;width:78.0px;height:36.0px;background:#dcfce7;border-radius:18px;"></div>
<span class="t" id="t91" style="left:2437.0px;top:1258.5px;font-size:18px;color:#166534;-webkit-text-stroke:0.7px #166534;transform:scaleX(1.0728);transform-origin:0 0;">Active</span>
<svg class="i" style="left:2622.0px;top:1255.0px;" width="24" height="24" viewBox="0 0 24 24" fill="none" stroke="#9ca3af" stroke-width="2" stroke-linecap="round" stroke-linejoin="round"><path d="M2 12s3-7 10-7 10 7 10 7-3 7-10 7-10-7-10-7Z"/><circle cx="12" cy="12" r="3"/></svg>
<svg class="i" style="left:2670.0px;top:1255.0px;" width="24" height="24" viewBox="0 0 24 24" fill="none" stroke="#9ca3af" stroke-width="2" stroke-linecap="round" stroke-linejoin="round"><path d="M11 4H4a2 2 0 0 0-2 2v14a2 2 0 0 0 2 2h14a2 2 0 0 0 2-2v-7"/><path d="M18.5 2.5a2.121 2.121 0 0 1 3 3L12 15l-4 1 1-4 9.5-9.5z"/></svg>
<svg class="i" style="left:2718.0px;top:1255.0px;" width="24" height="24" viewBox="0 0 24 24" fill="none" stroke="#9ca3af" stroke-width="2" stroke-linecap="round" stroke-linejoin="round"><path d="M3 6h18"/><path d="M19 6v14c0 1-1 2-2 2H7c-1 0-2-1-2-2V6"/><path d="M8 6V4c0-1 1-2 2-2h4c1 0 2 1 2 2v2"/><line x1="10" x2="10" y1="11" y2="17"/><line x1="14" x2="14" y1="11" y2="17"/></svg>
<div class="b" style="left:420.0px;top:1332.5px;width:2423.0px;height:1.5px;background:#e5e7eb;"></div>
<div class="b" style="left:457.0px;top:1390.0px;width:24.0px;height:24.0px;background:#fff;border:1.5px solid #d1d5db;border-radius:5.5px;"></div>
<div class="b" style="left:553.0px;top:1370.0px;width:60.0px;height:60.0px;background:linear-gradient(90deg,#22c55e,#3b82f6);border-radius:50%;"></div>
<span class="t" id="t92" style="left:568.4px;top:1387.9px;font-size:24px;color:#fff;-webkit-text-stroke:1.0px #fff;transform:scaleX(0.9177);transform-origin:0 0;">SN</span>
<span class="t" id="t93" style="left:637.3px;top:1362.2px;font-size:21px;color:#111827;-webkit-text-stroke:0.35px #111827;letter-spacing:0.004px;">Siti 2 Nurhaliza</span>
<span class="t" id="t94" style="left:637.3px;top:1392.2px;font-size:21px;color:#6b7280;letter-spacing:0.055px;">siti.nurhaliza@student.com</span>
<span class="t" id="t95" style="left:637.3px;top:1420.8px;font-size:18px;color:#9ca3af;letter-spacing:0.160px;">+62821402522</span>
<div class="b" style="left:1113.0px;top:1382.0px;width:111.0px;height:36.0px;background:#dbeafe;border-radius:18px;"></div>
<svg class="i" style="left:1124.7px;top:1391.0px;" width="18" height="18" viewBox="0 0 24 24" fill="none" stroke="#1e40af" stroke-width="2" stroke-linecap="round" stroke-linejoin="round"><path d="M19 21v-2a4 4 0 0 0-4-4H9a4 4 0 0 0-4 4v2"/><circle cx="12" cy="7" r="4"/></svg>
<span class="t" id="t96" style="left:1149.6px;top:1390.8px;font-size:18px;color:#1e40af;-webkit-text-stroke:0.3px #1e40af;letter-spacing:-0.274px;">General</span>
<span class="t" id="t97" style="left:1381.0px;top:1374.2px;font-size:21px;color:#111827;letter-spacing:0.085px;">0 enrolled</span>
<span class="t" id="t98" style="left:1381.0px;top:1403.9px;font-size:21px;color:#6b7280;letter-spacing:0.539px;">0 completed</span>
<div class="b" style="left:1628.0px;top:1394.0px;width:88.8px;height:12.0px;background:#e5e7eb;border-radius:6px;"></div>
<div class="b" style="left:1729.0px;top:1382.0px;width:49.0px;height:36.0px;background:#fee2e2;border-radius:18px;"></div>
<span class="t" id="t99" style="left:1741.0px;top:1390.8px;font-size:18px;color:#dc2626;-webkit-text-stroke:0.3px #dc2626;letter-spacing:-1.016px;">0%</span>
<svg class="i" style="left:1850.0px;top:1388.0px;" width="24" height="24" viewBox="0 0 24 24" fill="none" stroke="#9ca3af" stroke-width="2" stroke-linecap="round" stroke-linejoin="round"><circle cx="12" cy="12" r="10"/><polyline points="12 6 12 12 16 14"/></svg>
<span class="t" id="t100" style="left:1881.0px;top:1388.9px;font-size:21px;color:#111827;letter-spacing:0.641px;">0h</span>
<svg class="i" style="left:2161.5px;top:1388.0px;" width="24" height="24" viewBox="0 0 24 24" fill="none" stroke="#eab308" stroke-width="2" stroke-linecap="round" stroke-linejoin="round"><path d="M6 9H4.5a2.5 2.5 0 0 1 0-5H6"/><path d="M18 9h1.5a2.5 2.5 0 0 0 0-5H18"/><path d="M4 22h16"/><path d="M10 14.66V17c0 .55-.47.98-.97 1.21C7.85 18.75 7 20.24 7 22"/><path d="M14 14.66V17c0 .55.47.98.97 1.21C16.15 18.75 17 20.24 17 22"/><path d="M18 2H6v7a6 6 0 0 0 12 0V2Z"/></svg>
<span class="t" id="t101" style="left:2191.5px;top:1388.9px;font-size:21px;color:#111827;transform:scaleX(1.1551);transform-origin:0 0;">0</span>
<div class="b" style="left:2424.0px;top:1383.0px;width:78.0px;height:36.0px;background:#dcfce7;border-radius:18px;"></div>
<span class="t" id="t102" style="left:2437.0px;top:1391.5px;font-size:18px;color:#166534;-webkit-text-stroke:0.7px #166534;transform:scaleX(1.0728);transform-origin:0 0;">Active</span>
<svg class="i" style="left:2622.0px;top:1388.0px;" width="24" height="24" viewBox="0 0 24 24" fill="none" stroke="#9ca3af" stroke-width="2" stroke-linecap="round" stroke-linejoin="round"><path d="M2 12s3-7 10-7 10 7 10 7-3 7-10 7-10-7-10-7Z"/><circle cx="12" cy="12" r="3"/></svg>
<svg class="i" style="left:2670.0px;top:1388.0px;" width="24" height="24" viewBox="0 0 24 24" fill="none" stroke="#9ca3af" stroke-width="2" stroke-linecap="round" stroke-linejoin="round"><path d="M11 4H4a2 2 0 0 0-2 2v14a2 2 0 0 0 2 2h14a2 2 0 0 0 2-2v-7"/><path d="M18.5 2.5a2.121 2.121 0 0 1 3 3L12 15l-4 1 1-4 9.5-9.5z"/></svg>
<svg class="i" style="left:2718.0px;top:1388.0px;" width="24" height="24" viewBox="0 0 24 24" fill="none" stroke="#9ca3af" stroke-width="2" stroke-linecap="round" stroke-linejoin="round"><path d="M3 6h18"/><path d="M19 6v14c0 1-1 2-2 2H7c-1 0-2-1-2-2V6"/><path d="M8 6V4c0-1 1-2 2-2h4c1 0 2 1 2 2v2"/><line x1="10" x2="10" y1="11" y2="17"/><line x1="14" x2="14" y1="11" y2="17"/></svg>
</body></html>
